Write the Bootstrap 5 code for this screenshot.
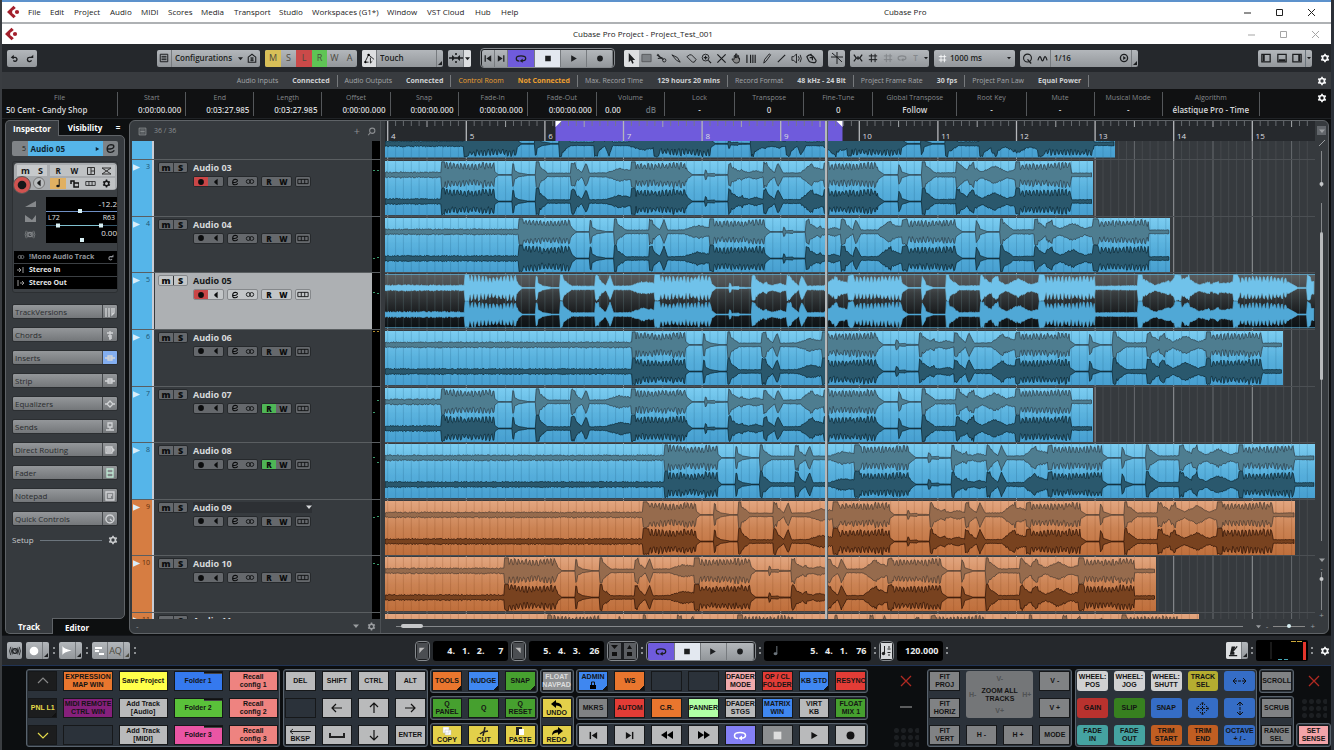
<!DOCTYPE html>
<html lang="en">
<head>
<meta charset="utf-8">
<meta name="viewport" content="width=device-width, initial-scale=1">
<title>Cubase Pro Project - Project_Test_001</title>
<link rel="stylesheet" href="https://cdn.jsdelivr.net/npm/bootstrap@5.3.0/dist/css/bootstrap.min.css">
<script src="https://cdn.jsdelivr.net/npm/bootstrap@5.3.0/dist/js/bootstrap.bundle.min.js"></script>
<style>
:root{--panel:#363a3e;--edge:#5f6367;--bar:#25282c;--blue:#55b5e9;--orange:#d67d42;--violet:#6f5bdc}
body{font:8px/12px "Open Sans","Noto Sans",sans-serif;background:#0d0f10;color:#c9cbcd}
svg{display:block;flex:none}
.shell{min-height:640px;border-left:2px solid #3a3d41;border-right:3px solid #2b3038;overflow:hidden}
.shell .btn{--bs-btn-padding-x:0;--bs-btn-padding-y:0;--bs-btn-border-width:0px;--bs-btn-border-radius:0;font:inherit;color:inherit;display:flex;align-items:center;justify-content:center}
.shell select,.shell input{font:inherit;color:inherit;border:0;background:none;appearance:none;padding:0;min-width:0}
.px7{width:7px}.px13{width:13px}.px14{width:14px}.px15{width:15px}.px16{width:16px}.px17{width:17px}.px18{width:18px}
.px60{width:60px}.px66{width:66px}
.gap3{gap:3px}.gap4{gap:4px}.gap5{gap:5px}.gap8{gap:8px}
.shrinkable{min-width:0;min-height:0}
.zero{font-size:7px}
/* window bars */
.winbar{background:#fff;color:#222;display:flex;align-items:center}
.winbar.first{height:24px;border-top:2px solid #5d92cc;border-bottom:2px solid #aeb1b4;padding:0 4px}
.winbar.second{height:20px;padding-left:2px;font-weight:500}
.before1{flex:363 1 0}.after1{flex:308 1 0}.before2{flex:557 1 0}.after2{flex:524 1 0}
.menus{display:grid;grid-template-columns:22px 24px 36px 31px 27px 33px 33px 45px 33px 75px 40px 48px 26px 24px}
.menus a{color:#222;text-decoration:none;white-space:nowrap}
.winbtns{display:grid;grid-template-columns:repeat(3,32px);justify-items:center}
#wb2{color:#a5a5a5}
/* toolbar */
.toolbar{height:28px;background:var(--bar);padding:0 1px 0 5px}
.tgroup{height:17px;display:flex;background:linear-gradient(#b3b7bb,#93979b);border-radius:2px;color:#1c1e20;overflow:hidden;font-weight:600}
.tgroup .btn,.tgroup select{border-right:1px solid #777b7f;height:17px}
.tgroup.plain .btn{border-right:0}
.tgroup select{padding:0 3px}
.tgroup .noline{border:0}
.tgroup .corner{width:6px;align-items:flex-end;padding-bottom:2px;border:0}
.tgroup .pale{background:#dddfe1}
.tgroup .letters .btn,.letters .btn{font-weight:400;color:#4c4a40;font-size:9px}
.framed{border:1px solid #85898d;border-radius:4px;padding:1px;height:20px;background:#1b1d20}
.statusline{height:17px;background:#383b3f;font-size:7px;color:#a3a6a9}
.statusline b{color:#d0d2d4;margin-left:14px}
.statusline .item{border-right:1px solid #76797c;padding:0 7px;line-height:12px;white-space:nowrap}
.statusline .warn,.statusline .warn b{color:#eea02f}
.infoline{height:30px;background:#101112;border-bottom:1px solid #202326;grid-template-columns:116fr 68fr 68fr 68fr 68fr 68fr 69fr 69fr 68fr 70fr 69fr 69fr 84fr 69fr 68fr 68fr 97fr 71fr}
.cellx{border-right:1px solid #54575a;margin:3px 0;text-align:center;line-height:12px;font-size:7px;color:#85888b;white-space:nowrap}
.cellx b{display:block;font-weight:600;font-size:8px;color:#d5d7d9}
.cellx.timeval b{text-align:right;padding-right:4px}
/* inspector */
.inspector{width:120px;margin:1px 4px 1px 3px;flex:none}
.tabrow{height:16px;display:flex}
.tabrow .btn{color:#fff;font-weight:700}
.tabrow .on{background:var(--panel);border:1px solid var(--edge);position:relative;z-index:1}
.inspector .top .on{border-bottom:0;border-radius:5px 0 0 0;width:54px}
.inspector .bot .btn{padding-top:3px;width:48px}
.inspector .bot .on{border-top:0;border-radius:0 0 0 5px}
.insbody{background:var(--panel);border:1px solid var(--edge);padding:5px 6px;border-radius:0 5px 5px 0;margin:-1px 0}
.namebar{height:15px;background:#7f8387;border-radius:2px;overflow:hidden;color:#1c1e20}
.namebar .num{width:15px;text-align:right;font-size:7px;line-height:15px;padding-right:1px}
.namebar .nm{background:var(--blue);font-weight:700;color:#0f2634;padding:0 3px;width:75px}
.chan{border:1px solid #2c2f32;border-radius:3px;background:#3c4044;padding:1px 1px 3px;margin-top:5px;height:132px}
.chanbtns{background:#a9acaf;border-radius:4px 4px 4px 12px;height:27px;color:#161718;font-weight:700;width:103px;padding:2px 2px 1px 3px}
.msbig{width:30px}.msbig>div:first-child{line-height:11px;font-size:9px;background:#c6c9cb}
.msbig>div:last-child{gap:2px;margin-left:-4px}
.recbig{width:18px;height:18px}.monbig{width:12px;height:12px}
.shell .recbig{background:#d05350;border:1px solid #555}.shell .monbig{background:#b9bcbe;border:1px solid #777;margin-top:1px}
.rwrow{height:11px;margin-bottom:2px;background:#bfc2c4;line-height:11px}.rwrow .btn{width:25%}
.shell .amber{background:#e0b062}
.dispwrap{margin-top:7px;width:103px;color:#85888b}.dispicons{width:32px;height:46px}
.disp{background:#000;color:#e0e2e4;width:71px;height:46px;padding:2px 0}
.disp>div{line-height:10px;text-align:right}.disp .pan{font-size:7px;padding:0 2px}
.routes{margin-top:8px}
.routes>div{background:#000;height:12px;margin-bottom:1px;line-height:12px;font-size:7px;color:#e5e6e7;font-weight:700;padding:0 3px;width:103px;display:flex;gap:4px}
.routes .dim{color:#92959a}
#sections{margin-top:11px}
.section{height:15px;background:linear-gradient(#94979a,#74777a);border-radius:2px;border:1px solid #2b2e31;margin-bottom:8px;color:#2a2c2e;overflow:hidden}
.shell .section .btn{width:100%;height:13px;justify-content:space-between;padding-left:2px}
.section .icn{width:15px;height:13px;border-left:1px solid #45484b;display:flex;align-items:center;justify-content:center}
.section .lit{background:#83aef0}
.setupbtn{gap:6px}
.shell input[type=range]{display:block;width:100%;height:4px}
.shell input[type=range]::-webkit-slider-runnable-track{height:1px;background:var(--tr,#6f8fc4)}
.shell input[type=range]::-webkit-slider-thumb{appearance:none;width:4px;height:4px;background:#d8f0f4;margin-top:-2px}
.shell .dot{--tr:#888}.shell input.dot{width:32px}
.shell .dot::-webkit-slider-thumb{border-radius:2px}
.shell .bare{--tr:transparent}
/* project zone */
.project{background:var(--panel);border:1px solid var(--edge);border-radius:6px;margin:1px 2px 1px 0;padding-left:2px}
.tracks{width:248px;flex:none}
.headrow{height:20px;flex:none;color:#8b8e91;padding:0 4px 0 6px;gap:7px}
.plus{font-size:11px!important}
.footrow{height:14px;flex:none;color:#9a9da0}
.trow{flex:1 1 0;min-height:0;display:flex;overflow:hidden;border-top:1px solid #5a5e61}
.cut-top{flex:0 0 18px!important;border-top:0!important}
.cut-bot{flex:0 0 7px!important}
.strip{width:22px;border-right:2px solid #c9ccd4;margin-right:1px;background:var(--blue);color:#1d5270;font-size:7px;display:flex;justify-content:flex-end;padding-right:2px;line-height:14px;flex:none}
.strip svg{margin:4px auto 0 1px}
.strip.o{background:var(--orange);color:#5d2c0b}
.tbody{flex:1;padding:2px 3px 0;display:flex;gap:5px;color:#d7d9db}
.tbody.sel{background:#adb0b3;color:#16181a}
.bgrp{display:flex;background:#65686c;border:1px solid #26292c;border-radius:2px;height:11px;color:#0b0c0d;overflow:hidden;font:800 8px/9px "Open Sans","Noto Sans",sans-serif}
.sel .bgrp{background:#c3c6c8;border-color:#85888b}
.bgrp .btn{width:14px;height:9px;flex:none}
.bgrp .btn+.btn{width:15px}
.bgrp.ms .btn{width:14px;font-size:9px}
.bgrp.ms .btn+.btn{border-left:1px solid #303336}
.minis{gap:3px;margin-top:3px}
.shell .redon{background:#c94647}.shell .greenon{background:#4fb656}
.tname{font:700 9px/11px "Open Sans","Noto Sans",sans-serif}
.tname.drop{background:#2d3034;width:119px;display:flex;justify-content:space-between;align-items:center}
.meterx{width:8px;background:#000;flex:none}
.divider{width:5px;border-left:1px solid #4c5054;flex:none}
.ruler{background:#26292d;height:20px;flex:none;position:relative}
.ruler .nums{position:absolute;inset:9px 0 0 0;display:flex;color:#dcdee0;font-size:8px;overflow:hidden}
.ruler svg,.lanes{width:100%}
.lane{flex:1 1 0;min-height:0;display:flex;overflow:hidden;border-top:1px solid #4b4f53}
.lane svg{flex:1 1 0;min-height:0;min-width:0}
.playhead{position:absolute;top:0;bottom:0;left:47.3%;width:3px;background:#b4b8ba;border:solid #5b6266;border-width:0 1px 0 0}
.hscroll{padding-left:11px}
.hline{border-top:1px solid #85888b;height:1px}
.hthumb{width:22px;height:4px;margin:-3px 0 0 5px;background:#c6c8ca;border-radius:2px}
.vbar{width:13px;flex:none;align-items:center;color:#9a9da0;padding:5px 0 14px}
.vbar span{line-height:9px}
.shell .vmenu{width:9px;height:9px;background:#62666b}
.v1{flex:31;border-left:1px solid #85888b}.v2{flex:155;width:3px;background:#b9bbbd;border-radius:2px}.v3{flex:170;width:1px;background:#85888b}
/* transport zone */
.transport{height:31px;background:var(--bar);border-top:1px solid #14161a;border-bottom:1px solid #203354;padding:0 1px 0 5px}
.shell .loc{width:11px;height:16px;background:#4b4e52;color:#bbb}
.shell .punch{width:12px;height:16px;background:#5b5e62;color:#111}
.shell .loc.pale{background:#d6d8da;color:#222}
.shell .whitei{color:#fff}
.lcd{background:#000;border-radius:3px;height:20px;color:#e8eaeb;font:700 9px/20px "Open Sans","Noto Sans",sans-serif;display:flex;justify-content:flex-end;gap:7px;padding:0 4px;width:75px}
.lcd.wide{width:107px}.lcd.tempo{width:46px}
.lcd .last{min-width:12px;text-align:right}
.dots{width:1px;height:7px;border-left:2px dotted #8b8e91}
/* controller deck */
.deck{background:#0c0e10;padding:3px 0 3px 24px;color:#141414;font:700 7px/8px "Liberation Sans",Arial,sans-serif}
.grp{display:flex;flex-direction:column;gap:3px;min-width:0}
.boxk{background:#2b323a;border:1px solid #59636d;border-radius:3px;padding:1px;display:grid;gap:7px 6px;grid-auto-rows:20px}
.boxk .btn{min-width:0;border:1px solid #16181a;white-space:nowrap;position:relative;flex-direction:column;text-align:center;overflow:visible}
.boxk .rnd{border-radius:3px;border:0}
.zoomall{grid-column:span 2;grid-row:span 2}
.zgrid{grid-template-columns:12px 1fr 12px;align-items:center;width:66px;gap:4px 0;color:#505254}
.zgrid b{color:#141414}
.fold::before{content:"";position:absolute;right:0;top:0;width:18px;height:2px;background:#111;border-bottom:1px solid #444}
.cnr::after{content:"";position:absolute;right:0;bottom:0;width:4px;height:4px;background:linear-gradient(135deg,transparent 50%,#111 50%)}
.perf{width:26px;height:20px;background:radial-gradient(circle,#1c1f22 2px,transparent 3px) 0 0/7px 7px}
.tall{height:24px}
.sidekeys{padding:6px 0 0}
</style>
</head>
<body>
<svg width="0" height="0" class="position-absolute" aria-hidden="true"><defs>
<symbol id="logo" viewBox="0 0 14 14"><path d="M1 7 7.500.8 9.800 3 8 4.600Q6 5.600 6 7q0 1.600 2 2.600l1.800 1.600-2.300 2z" fill="#a3202c"/><circle cx="11" cy="7" r="2.100" fill="#a3202c"/></symbol>
<symbol id="gear" viewBox="0 0 12 12"><circle cx="6" cy="6" r="3" fill="none" stroke="currentColor" stroke-width="2"/><path d="M6 .8v2M6 9.200v2M1.500 3.400l1.700 1M8.800 7.600l1.700 1M1.500 8.600l1.700-1M8.800 4.400l1.700-1" stroke="currentColor" stroke-width="2"/></symbol>
<symbol id="undo" viewBox="0 0 12 12"><path d="M3 4.500h4a2.600 2.600 0 1 1-2.500 4" fill="none" stroke="currentColor" stroke-width="1.800"/><path d="M1 4.600 5 1v6z" fill="currentColor"/></symbol>
<symbol id="redo" viewBox="0 0 12 12"><path d="M9 4.500H6a2.800 2.800 0 1 0 2.600 3.800" fill="none" stroke="currentColor" stroke-width="1.800"/><path d="M11 5.400V1L6.600 5.400z" fill="currentColor"/></symbol>
<symbol id="listi" viewBox="0 0 12 12"><path d="M1.500 1.500h9v9h-9zM3 4h6M3 6h6M3 8h6" fill="none" stroke="currentColor" stroke-width="1.200"/></symbol>
<symbol id="home" viewBox="0 0 12 12"><path d="M1.500 5 6 1.500 10.500 5v6h-9zM4 6h4M4 8.500h4M6 5v5" fill="none" stroke="currentColor" stroke-width="1.300"/></symbol>
<symbol id="down" viewBox="0 0 6 6"><path d="M0 1.500h6L3 5z" fill="currentColor"/></symbol>
<symbol id="cor" viewBox="0 0 6 6"><path d="M6 0v6H0z" fill="currentColor"/></symbol>
<symbol id="touch" viewBox="0 0 12 12"><path d="M1 10 5 2l6 5M1 10h4M7 5v6l2-2" fill="none" stroke="currentColor"/><circle cx="5" cy="2" r="1.300"/><circle cx="1.500" cy="10" r="1.200"/></symbol>
<symbol id="scr" viewBox="0 0 14 12"><path d="M0 6h5M14 6H9M7 1v2M7 5v2M7 9v2" stroke="currentColor" stroke-width="1.600"/><path d="m3 3 3.500 3L3 9zm8 0L7.500 6 11 9z" fill="currentColor"/></symbol>
<symbol id="prev" viewBox="0 0 10 10"><path d="M1.500 1v8" stroke="currentColor" stroke-width="1.600"/><path d="M9 1v8L3 5z" fill="currentColor"/></symbol>
<symbol id="next" viewBox="0 0 10 10"><path d="M8.500 1v8" stroke="currentColor" stroke-width="1.600"/><path d="M1 1v8l6-4z" fill="currentColor"/></symbol>
<symbol id="loop" viewBox="0 0 14 10"><path d="M5 8C2 8 1.500 6.500 1.500 5S3 2 7 2s5.500 1.500 5.500 3S11 7.600 8 7.800" fill="none" stroke="currentColor" stroke-width="1.500"/><path d="M9 5v5L5.500 7.800z" fill="currentColor"/></symbol>
<symbol id="stop" viewBox="0 0 10 10"><path d="M1.500 1.500h7v7h-7z" fill="currentColor"/></symbol>
<symbol id="play" viewBox="0 0 10 10"><path d="M1.500 1v8l7-4z" fill="currentColor"/></symbol>
<symbol id="rec" viewBox="0 0 10 10"><circle cx="5" cy="5" r="3.600" fill="currentColor"/></symbol>
<symbol id="arrow" viewBox="0 0 12 12"><path d="M3 0v10l2.300-2 1.500 3.600 1.600-.7L7 7.500h3z" fill="currentColor"/></symbol>
<symbol id="rsel" viewBox="0 0 12 12"><path d="M1 1.500h10v8H1z" fill="#7d8185" stroke="#55585b"/></symbol>
<symbol id="cutt" viewBox="0 0 12 12"><path d="m1 2 7 5M2 6l5-1" stroke="currentColor" stroke-width="1.300"/><circle cx="9" cy="8" r="1.800" fill="none" stroke="currentColor"/><path d="M4 4 2 1" stroke="currentColor"/></symbol>
<symbol id="glue" viewBox="0 0 12 12"><path d="m1 2 6 3 3 5-4-2z" fill="none" stroke="currentColor"/></symbol>
<symbol id="erase" viewBox="0 0 12 12"><path d="m1 4 3-2h2l5 5-2 3H7z" fill="none" stroke="currentColor"/></symbol>
<symbol id="zoomi" viewBox="0 0 12 12"><circle cx="5" cy="5" r="3.700" fill="none" stroke="currentColor"/><path d="M3 5h4M5 3v4M8 8l3 3" stroke="currentColor" stroke-width="1.300"/></symbol>
<symbol id="xx" viewBox="0 0 12 12"><path d="m1.500 1.500 9 9M10.500 1.500l-9 9" stroke="currentColor" stroke-width="1.300"/></symbol>
<symbol id="hand" viewBox="0 0 12 12"><path d="M3.500 7V3l1-.5.500 3V1h1.300v4.500l1-3 1 .4V6l1-.5V8q0 3-3 3T3 9.500L1 6.500h1z" fill="#888" stroke="currentColor"/></symbol>
<symbol id="warp" viewBox="0 0 12 12"><path d="M1 2v9M5 2v9M7.500 2v9M10 2v9" stroke="currentColor" stroke-width="1.300"/></symbol>
<symbol id="pen" viewBox="0 0 12 12"><path d="m3 11 1-4 5-6 1.500 1-5 7z" fill="none" stroke="currentColor"/></symbol>
<symbol id="lin" viewBox="0 0 12 12"><path d="m2 10 8-8" stroke="currentColor" stroke-width="1.200"/></symbol>
<symbol id="spk" viewBox="0 0 12 12"><path d="M1 4h2l3-3v10L3 8H1zM8 3.500q2 2.500 0 5M10 2q2.500 4 0 8" fill="none" stroke="currentColor"/></symbol>
<symbol id="pal" viewBox="0 0 12 12"><path d="M1 4q3-4 7 0l3 4q0 3-3 2.500t-4-1T1 4zM4 5h3v3M5 1l2 3" fill="none" stroke="currentColor" stroke-width="1.300"/></symbol>
<symbol id="xf" viewBox="0 0 12 12"><path d="M6 0v12M0 5h12M1 1q5 4 10 9" fill="none" stroke="currentColor"/></symbol>
<symbol id="snp" viewBox="0 0 12 12"><path d="m1 2 3 4-3 4M11 2 8 6l3 4M4 6h4M6 4v4" fill="none" stroke="currentColor" stroke-width="1.500"/></symbol>
<symbol id="hash" viewBox="0 0 12 12"><path d="M4 1v10M8.500 1v10M1 3.500h10M1 8h10" stroke="currentColor" stroke-width="1.200"/></symbol>
<symbol id="qq" viewBox="0 0 12 12"><circle cx="6" cy="5.500" r="4.300" fill="none" stroke="currentColor" stroke-width="1.200"/><path d="m6 7 4 4.500" stroke="currentColor" stroke-width="1.400"/></symbol>
<symbol id="qplay" viewBox="0 0 12 12"><circle cx="6" cy="6" r="4.300" fill="none" stroke="currentColor" stroke-width="1.600"/><path d="M5 3.500v5L8.500 6z" fill="currentColor"/></symbol>
<symbol id="wavy" viewBox="0 0 12 12"><path d="M1 8q2-7 3.500-2t3 0 3.500 2" fill="none" stroke="currentColor" stroke-width="1.300"/></symbol>
<symbol id="lz" viewBox="0 0 12 12"><path d="M1 1.500h10v9H1z" fill="none" stroke="currentColor" stroke-width="1.500"/><path d="M2 2h2.500v8H2z" fill="currentColor"/></symbol>
<symbol id="bz" viewBox="0 0 12 12"><path d="M1 1.500h10v9H1z" fill="none" stroke="currentColor" stroke-width="1.500"/><path d="M2 7.500h8V10H2z" fill="currentColor"/></symbol>
<symbol id="rz" viewBox="0 0 12 12"><path d="M1 1.500h10v9H1z" fill="none" stroke="currentColor" stroke-width="1.500"/><path d="M7.500 2H10v8H7.500z" fill="currentColor"/></symbol>
<symbol id="mag" viewBox="0 0 12 12"><circle cx="7" cy="5" r="3.500" fill="none" stroke="currentColor" stroke-width="1.400"/><path d="M4.500 7.500 1.500 11" stroke="currentColor" stroke-width="1.400"/></symbol>
<symbol id="mon" viewBox="0 0 10 10"><path d="M7 1v8L3 6V4z" fill="currentColor"/></symbol>
<symbol id="ee" viewBox="0 0 10 10"><path d="M2 5.500Q8 5.500 8 3.300 8 1.500 5.500 1.500 2 1.800 2 5.500q0 3 3 3 2 0 3.500-1.800" fill="none" stroke="currentColor" stroke-width="1.300"/></symbol>
<symbol id="oo" viewBox="0 0 12 8"><circle cx="4" cy="4" r="2.400" fill="none" stroke="currentColor"/><circle cx="8" cy="4" r="2.400" fill="none" stroke="currentColor"/></symbol>
<symbol id="fr" viewBox="0 0 14 8"><path d="M1 1.500h12v5H1zM5 1.500v5M9 1.500v5" fill="none" stroke="currentColor"/></symbol>
<symbol id="wedge" viewBox="0 0 10 8"><path d="M0 0v8l9-4z" fill="#d9eefa"/></symbol>
<symbol id="cyc" viewBox="0 0 12 12"><path d="M1 1v10q1-3 10-5Q2 4 1 1z" fill="#fff"/></symbol>
<symbol id="flagr" viewBox="0 0 12 12"><path d="M2 2h8v8L6.500 6z" fill="currentColor"/></symbol>
<symbol id="flagl" viewBox="0 0 12 12"><path d="M10 2H2v8l3.500-4z" fill="currentColor"/></symbol>
<symbol id="metro" viewBox="0 0 12 12"><path d="M4 1h4L7 4l-2 3h2v3H2z" fill="currentColor"/><path d="m5 7 5-6M1 11h9" stroke="currentColor" stroke-width="1.400"/></symbol>
<symbol id="note" viewBox="0 0 8 12"><path d="M5 0h1.200v9H5z" fill="currentColor"/><ellipse cx="4" cy="9.300" rx="2.300" ry="1.700" fill="currentColor"/></symbol>
<symbol id="ping" viewBox="0 0 14 12"><path d="M4 2Q1 6 4 10M10 2q3 4 0 8M2 1q-3 5 0 10M12 1q3 5 0 10" fill="none" stroke="currentColor"/><circle cx="7" cy="6" r="2.800" fill="none" stroke="currentColor" stroke-width="1.600"/><path d="M7 4v2h2" fill="none" stroke="currentColor"/></symbol>
</defs></svg>

<div class="shell vh-100 d-flex flex-column">
  <header>
    <div class="winbar first">
      <svg width="14" height="14" class="me-2"><use href="#logo"/></svg>
      <nav class="menus" id="menus" aria-label="Main menu"></nav>
      <span class="before1"></span><span>Cubase Pro</span><span class="after1"></span>
      <div class="winbtns" id="wb1"></div>
    </div>
    <div class="winbar second">
      <svg width="14" height="14"><use href="#logo"/></svg>
      <span class="before2"></span><span>Cubase Pro Project - Project_Test_001</span><span class="after2"></span>
      <div class="winbtns" id="wb2"></div>
    </div>
  </header>

  <div class="toolbar d-flex align-items-center justify-content-between">
    <div class="tgroup plain"><button class="btn px15" aria-label="Undo"><svg width="9" height="9"><use href="#undo"/></svg></button><button class="btn px15" aria-label="Redo"><svg width="9" height="9"><use href="#redo"/></svg></button></div>
    <div class="d-flex align-items-center gap5">
      <div class="tgroup"><button class="btn px15" aria-label="Setup"><svg width="10" height="10"><use href="#listi"/></svg></button>
        <label class="d-flex align-items-center"><select aria-label="Configurations" class="noline px66"><option>Configurations</option></select><svg width="5" height="5"><use href="#down"/></svg></label>
        <button class="btn noline px17" aria-label="Home"><svg width="10" height="10"><use href="#home"/></svg></button></div>
      <div class="tgroup plain letters" id="mslr"></div>
      <div class="tgroup"><button class="btn px15 pale" aria-label="Automation"><svg width="11" height="11"><use href="#touch"/></svg></button><select aria-label="Automation mode" class="px60"><option>Touch</option></select><button class="btn corner" aria-label="More"><svg width="4" height="4"><use href="#cor"/></svg></button></div>
      <div class="tgroup me-1"><button class="btn px16" aria-label="Auto-scroll"><svg width="14" height="12"><use href="#scr"/></svg></button><button class="btn noline px7 pale" aria-label="Scroll options"><svg width="5" height="5"><use href="#down"/></svg></button></div>
      <div class="framed d-flex me-1"><div class="tgroup" data-transport="13 13 27 26 26 26"></div></div>
      <div class="tgroup plain pe-1" id="tools"></div>
      <div class="tgroup"><button class="btn noline px17" aria-label="Crossfade"><svg width="12" height="12"><use href="#xf"/></svg></button></div>
      <div class="tgroup plain"><button class="btn px15" aria-label="Snap zero"><svg width="10" height="10"><use href="#snp"/></svg></button><button class="btn px16" aria-label="Snap"><svg width="10" height="10"><use href="#hash"/></svg></button><button class="btn px14 opacity-25" aria-label="Snap type"><svg width="10" height="10"><use href="#hash"/></svg></button><button class="btn px14 opacity-25" aria-label="Cycle grid"><svg width="10" height="8"><use href="#loop"/></svg></button><button class="btn px13 opacity-25">T</button><button class="btn px7" aria-label="Snap menu"><svg width="4" height="4"><use href="#down"/></svg></button></div>
      <label class="tgroup align-items-center ps-1"><svg width="9" height="9" class="text-light"><use href="#hash"/></svg><select aria-label="Grid" class="noline px60"><option>1000 ms</option></select><svg width="4" height="4" class="me-1"><use href="#down"/></svg></label>
      <div class="tgroup"><button class="btn noline px15" aria-label="Quantize"><svg width="11" height="11"><use href="#qq"/></svg></button><button class="btn px16" aria-label="Iterative"><svg width="11" height="11"><use href="#wavy"/></svg></button><select aria-label="Quantize preset" class="noline px66"><option>1/16</option></select><button class="btn px15" aria-label="Quantize panel"><svg width="10" height="10"><use href="#qplay"/></svg></button><button class="btn corner" aria-label="More quantize"><svg width="4" height="4"><use href="#cor"/></svg></button></div>
    </div>
    <div class="d-flex align-items-center gap-1"><div class="tgroup plain"><button class="btn px16" aria-label="Left zone"><svg width="10" height="10"><use href="#lz"/></svg></button><button class="btn px15" aria-label="Lower zone"><svg width="10" height="10"><use href="#bz"/></svg></button><button class="btn px16" aria-label="Right zone"><svg width="10" height="10"><use href="#rz"/></svg></button><button class="btn px7 border-start border-secondary" aria-label="Layout"><svg width="4" height="4"><use href="#down"/></svg></button></div>
    <button class="btn ms-1 text-light" aria-label="Toolbar setup"><svg width="10" height="10"><use href="#gear"/></svg></button></div>
  </div>

  <div class="statusline d-flex align-items-center">
    <div class="flex-fill"></div>
    <div class="d-flex" id="status"></div>
    <div class="flex-fill d-flex justify-content-end"><button class="btn text-light me-1" aria-label="Status setup"><svg width="10" height="10"><use href="#gear"/></svg></button></div>
  </div>
  <div class="infoline d-grid" id="info"></div>

  <main class="d-flex flex-grow-1 shrinkable">
    <aside class="inspector d-flex flex-column">
      <div class="tabrow top"><button class="btn on">Inspector</button><button class="btn flex-fill">Visibility</button><button class="btn px14" aria-label="Tabs">=</button></div>
      <div class="insbody flex-grow-1">
        <div class="namebar d-flex justify-content-between"><span class="num">5</span><span class="nm d-flex justify-content-between align-items-center">Audio 05<svg width="5" height="6"><use href="#play"/></svg></span><button class="btn px15" aria-label="Edit channel"><svg width="11" height="11"><use href="#ee"/></svg></button></div>
        <div class="chan">
          <div class="chanbtns d-flex gap3">
            <div class="msbig"><div class="d-flex justify-content-around"><button class="btn">m</button><button class="btn">S</button></div>
              <div class="d-flex align-items-start"><button class="btn rounded-circle recbig" aria-label="Record enable"><svg width="12" height="12"><use href="#rec"/></svg></button><button class="btn rounded-circle monbig" aria-label="Monitor"><svg width="8" height="8"><use href="#mon"/></svg></button></div></div>
            <div class="flex-fill" id="chanR"></div>
          </div>
          <div class="dispwrap d-flex justify-content-between">
            <div class="dispicons d-flex flex-column align-items-center justify-content-around"><svg width="11" height="6"><path d="M0 6 11 0v6z" fill="currentColor"/></svg><svg width="11" height="7"><path d="M0 0v7h11V0L7 5z" fill="currentColor"/></svg><svg width="14" height="9"><use href="#ping"/></svg></div>
            <div class="disp"><div>-12.2</div><input type="range" value="48" aria-label="Volume"><div class="pan d-flex justify-content-between"><span>L72</span><span>R63</span></div><svg width="71" height="5"><path d="M0 2.500h71" stroke="#35566a"/><path d="M12 2.500h43" stroke="#7fc0d0"/><path d="M10 .5h4v4h-4zM53 .5h4v4h-4z" fill="#d8f0f4"/></svg><div>0.00</div><input type="range" value="50" class="bare" aria-label="Delay"></div>
          </div>
          <div class="routes"><div class="dim align-items-center"><svg width="8" height="8"><use href="#oo"/></svg><span class="flex-fill">!Mono Audio Track</span><svg width="7" height="7"><use href="#redo"/></svg></div><div class="align-items-center"><svg width="8" height="8"><path d="M0 4h4M2 2l2 2-2 2M6 1v6" stroke="#999" fill="none"/></svg>Stereo In</div><div class="align-items-center"><svg width="8" height="8"><path d="M1 1v6M3 4h4M5 2l2 2-2 2" stroke="#999" fill="none"/></svg>Stereo Out</div></div>
        </div>
        <div id="sections"></div>
        <button class="btn w-100 setupbtn"><span>Setup</span><span class="flex-fill border-top border-secondary"></span><svg width="10" height="10"><use href="#gear"/></svg></button>
      </div>
      <div class="tabrow bot"><button class="btn on">Track</button><button class="btn">Editor</button></div>
    </aside>

    <section class="project d-flex flex-grow-1 shrinkable">
      <div class="tracks d-flex flex-column">
        <div class="headrow d-flex align-items-center"><svg width="9" height="9"><use href="#listi"/></svg><span class="flex-fill zero">36 / 36</span><button class="btn plus">+</button><button class="btn" aria-label="Find track"><svg width="9" height="9"><use href="#mag"/></svg></button></div>
        <div class="d-flex flex-column flex-grow-1 shrinkable" id="tracklist"></div>
        <div class="footrow d-flex align-items-center justify-content-end gap8 px-1"><span class="flex-fill">-</span><svg width="6" height="6"><use href="#down"/></svg><svg width="9" height="9"><use href="#gear"/></svg></div>
      </div>
      <div class="divider"></div>
      <div class="d-flex flex-column flex-grow-1 shrinkable">
        <div class="position-relative d-flex flex-column flex-grow-1 shrinkable">
          <div class="ruler"><svg id="rulersvg" height="20" viewBox="0 0 930 20" preserveAspectRatio="none"></svg><div class="nums" id="nums"></div></div>
          <div class="lanes d-flex flex-column flex-grow-1 shrinkable" id="lanes"></div>
          <div class="playhead"></div>
        </div>
        <div class="footrow hscroll d-flex align-items-center gap5"><div class="flex-fill hline"><div class="hthumb"></div></div><svg width="5" height="5" class="ms-2"><use href="#down"/></svg><span>-</span><input class="dot" type="range" value="50" aria-label="Horizontal zoom"><span>+</span></div>
      </div>
      <div class="vbar d-flex flex-column">
        <button class="btn vmenu" aria-label="Ruler menu"><svg width="6" height="6"><use href="#down"/></svg></button>
        <svg width="8" height="8" class="mt-1"><path d="m1 7 6-6" stroke="currentColor"/></svg>
        <svg width="5" height="36" class="mt-1 mb-3"><path d="M2.500 0v36" stroke="#85888b"/><circle cx="2.500" cy="33" r="2" fill="#c6c8ca"/></svg>
        <div class="v1"></div><div class="v2"></div><div class="v3"></div>
        <svg width="6" height="6" class="mt-3"><use href="#down"/></svg><span>-</span>
        <svg width="5" height="38"><path d="M2.500 0v38" stroke="#85888b"/><circle cx="2.500" cy="7" r="2" fill="#c6c8ca"/></svg><span>+</span>
      </div>
    </section>
  </main>

  <div class="transport d-flex align-items-center justify-content-between">
    <div class="d-flex align-items-center gap4">
      <div class="tgroup"><button class="btn noline px15" aria-label="Constrain delay"><svg width="12" height="10"><use href="#ping"/></svg></button></div>
      <div class="tgroup"><button class="btn px17 whitei" aria-label="Record mode"><svg width="12" height="12"><use href="#rec"/></svg></button><button class="btn corner" aria-label="Record menu"><svg width="4" height="4"><use href="#cor"/></svg></button></div><span class="dots"></span>
      <div class="tgroup"><button class="btn px17" aria-label="Cycle mode"><svg width="12" height="11"><use href="#cyc"/></svg></button><button class="btn corner" aria-label="Cycle menu"><svg width="4" height="4"><use href="#cor"/></svg></button></div><span class="dots"></span>
      <div class="tgroup letters"><button class="btn px16" aria-label="MIDI record"><svg width="11" height="10"><path d="M1 1h7v2H1zM1 4h4v2H1zM5 7h5v2H5z" fill="#fff"/></svg></button><button class="btn px16">AQ</button><button class="btn corner" aria-label="AQ menu"><svg width="4" height="4"><use href="#cor"/></svg></button></div><span class="dots"></span>
    </div>
    <div class="d-flex align-items-center gap3">
      <div class="framed"><button class="btn loc" aria-label="Left locator"><svg width="8" height="9"><use href="#flagl"/></svg></button></div>
      <div class="lcd"><span>4.</span><span>1.</span><span>2.</span><span class="last">7</span></div>
      <div class="framed"><button class="btn loc" aria-label="Right locator"><svg width="8" height="9"><use href="#flagr"/></svg></button></div>
      <div class="lcd"><span>5.</span><span>4.</span><span>3.</span><span class="last">26</span></div>
      <div class="framed d-flex gap3"><button class="btn punch" aria-label="Punch in"><svg width="7" height="11"><path d="M0 0h7L3.500 4zM1 7h5v4H1z" fill="currentColor"/></svg></button><button class="btn punch" aria-label="Punch out"><svg width="7" height="11"><path d="M3.500 0 6 4H1zM1 7h5v4H1z" fill="currentColor"/></svg></button></div>
      <span class="dots"></span>
      <div class="framed d-flex"><div class="tgroup" data-transport="0 0 27 26 26 27"></div></div>
      <span class="dots"></span>
      <div class="lcd wide align-items-center"><svg width="7" height="10" class="me-auto ms-1 text-secondary"><use href="#note"/></svg><span>5.</span><span>4.</span><span>1.</span><span class="last">76</span></div>
      <span class="dots"></span>
      <div class="framed"><button class="btn loc pale" aria-label="Tempo track"><svg width="11" height="11"><path d="M3.500 1v7M8 1v2M8 9v2M6.500 4h3M6.500 7.500h3" stroke="currentColor" fill="none"/><circle cx="2.500" cy="8.500" r="1.700" fill="currentColor"/></svg></button></div>
      <div class="lcd tempo">120.000</div>
      <span class="dots"></span>
    </div>
    <div class="d-flex align-items-center gap3">
      <div class="tgroup"><button class="btn px16 pale" aria-label="Metronome"><svg width="11" height="12"><use href="#metro"/></svg></button><button class="btn corner" aria-label="Metronome menu"><svg width="4" height="4"><use href="#cor"/></svg></button></div><span class="dots"></span>
      <svg width="52" height="21"><rect width="52" height="21" rx="2"/><path d="M15 2v17" stroke="#333"/><path d="M35 1.500h5M41 1.500h5" stroke="#c9a73a"/><path d="M22 19.500h4M28 19.500h4" stroke="#46a8b6"/><path d="M48.500 2v18" stroke="#e4352b" stroke-width="3"/></svg><span class="dots"></span>
      <button class="btn text-light ms-1" aria-label="Transport setup"><svg width="10" height="10"><use href="#gear"/></svg></button>
    </div>
  </div>

  <footer class="deck d-flex" id="deck"></footer>
</div>

<script>
const $=id=>document.getElementById(id);
const ic=(n,w,h=w)=>`<svg width="${w}" height="${h}"><use href="#${n}"/></svg>`;

$('menus').innerHTML='File,Edit,Project,Audio,MIDI,Scores,Media,Transport,Studio,Workspaces (G1*),Window,VST Cloud,Hub,Help'.split(',').map(t=>`<a href="#">${t}</a>`).join('');
for(const id of ['wb1','wb2'])$(id).innerHTML=[['Minimize','M1 5h7'],['Maximize','M1.500 1.500h6v6h-6z'],['Close','m1 1 7 7M8 1 1 8']].map(([l,d])=>`<button class="btn" aria-label="${l}"><svg width="9" height="9"><path d="${d}" fill="none" stroke="currentColor"/></svg></button>`).join('');
$('mslr').innerHTML=[['M','#d8bf58'],['S',''],['L','#cb4a49'],['R','#5fc455'],['W',''],['A','']].map(([t,c])=>`<button class="btn px${t=='M'||t=='L'?16:15}"${c&&` style="background:${c}"`}>${t}</button>`).join('');
document.querySelectorAll('[data-transport]').forEach(el=>{
  const w=el.dataset.transport.split(' ');
  el.innerHTML=['prev','next','loop','stop','play','rec'].map((n,i)=>+w[i]?`<button class="btn" aria-label="${n}" style="width:${w[i]}px;${n=='loop'?'background:var(--violet)':n=='stop'?'background:#e3e8f0':''}">${ic(n,n=='loop'?12:8,9)}</button>`:'').join('');
});
$('tools').innerHTML='arrow,rsel,cutt,glue,erase,zoomi,xx,hand,warp,pen,lin,spk,pal'.split(',').map((n,i)=>`<button class="btn px15 ${i?'':'pale'}" aria-label="${n}">${ic(n,11)}</button>`).join('');
$('status').innerHTML=[['Audio Inputs','Connected'],['Audio Outputs','Connected'],['Control Room','Not Connected',1],['Max. Record Time','129 hours 20 mins'],['Record Format','48 kHz - 24 Bit'],['Project Frame Rate','30 fps'],['Project Pan Law','Equal Power']].map(([a,b,w])=>`<div class="item ${w?'warn':''}">${a}<b>${b}</b></div>`).join('');
$('info').innerHTML=[['File','50 Cent - Candy Shop'],['Start','0:00:00.000'],['End','0:03:27.985'],['Length','0:03:27.985'],['Offset','0:00:00.000'],['Snap','0:00:00.000'],['Fade-In','0:00:00.000'],['Fade-Out','0:00:00.000'],['Volume','0.00'],['Lock','-'],['Transpose','0'],['Fine-Tune','0'],['Global Transpose','Follow'],['Root Key','-'],['Mute','-'],['Musical Mode','-'],['Algorithm','élastique Pro - Time']].map(([a,b],i)=>`<div class="cellx ${i>0&&i<8?'timeval':''}">${a}<b ${i?'':'class="text-start ps-1"'}>${a=='Volume'?'<span class="d-flex justify-content-between px-2"><span>0.00</span><span class="text-secondary">dB</span></span>':b}</b></div>`).join('')+`<div class="d-flex justify-content-end align-items-start pe-1 pt-1"><button class="btn text-light" aria-label="Info setup">${ic('gear',10)}</button></div>`;

$('chanR').innerHTML=[['R','W',`<svg width="8" height="8"><path d="M.5.5h7v7h-7zM4 0v8M4 4h4" fill="none" stroke="#333"/></svg>`,`<svg width="9" height="8"><path d="m0 1 9 6H0l9-6z" fill="none" stroke="#333"/></svg>`],[ic('note',6,9),`<svg width="9" height="8"><path d="M4 3h5v4H4zM1 4V1h3v2" stroke="#111" fill="none" stroke-width="1.500"/></svg>`,ic('fr',11,7),ic('gear',9)]].map((r,j)=>`<div class="rwrow d-flex">${r.map((t,i)=>`<button class="btn ${j&&!i?'amber':''}">${t}</button>`).join('')}</div>`).join('');

const secIcons={TrackVersions:'M1 1v9M4 1v9M7 1v7l2-2V1',Chords:'M5 1v9M2 3h6M3 6h4M4 8h3',Inserts:'M0 5h10M3 3h4v4H3z',Strip:'M0 5h10M3 3h4v4H3z',Equalizers:'M0 5h2l3-3 3 3-3 3-3-3M8 5h2',Sends:'M3 1h4v4H3zM1 8h8M5 5v3','Direct Routing':'M1 2h6v6H1zM2 4h4M2 6h4M7 3l2 2-2 2',Fader:'M2 1h6v8H2zM2 5h6',Notepad:'M1 1h8v8H1zM3 4h4M3 6h3','Quick Controls':'M5 1a4 4 0 1 1-.1 0M5 5l2 2'};
$('sections').innerHTML=Object.entries(secIcons).map(([n,d])=>`<div class="section"><button class="btn"><span>${n}</span><span class="icn ${n=='Inserts'?'lit':''}"><svg width="10" height="10"><path d="${d}" fill="none" stroke="${n=='Fader'?'#bfe8d4':'#d2d4d6'}" stroke-width="1.300"/></svg></span></button></div>`).join('');

/* tracks: start is where the first loud section falls on the 930-unit timeline, end is the clip's right edge */
const tracks=[
 {n:2,start:79,end:730,cut:'top'},{n:3,start:56,end:708,rec:1,m:[4,10,10]},{n:4,start:134,end:785,m:[4,41,40]},
 {n:5,start:80,end:930,rec:1,sel:1,m:[4,19,20]},{n:6,start:247,end:898,m:[4,1,1,'#b08a2a']},{n:7,start:56,end:708,read:1,m:[4,25,13]},
 {n:8,start:279.500,end:930,read:1,m:[4,14,19]},{n:9,start:258,end:910,drop:1,o:1,m:[4,17,16]},{n:10,start:119.500,end:771,o:1,m:[4,7,8]},
 {n:11,start:162.500,end:814,o:1,cut:'bot'}];
$('tracklist').innerHTML=tracks.map(t=>`<div class="trow ${t.cut?'cut-'+t.cut:''}"><div class="strip ${t.o?'o':''}">${t.cut=='top'?'':ic('wedge',8,7)+t.n}</div>
<div class="tbody ${t.sel?'sel':''}">${t.cut=='top'?'':`<div class="bgrp ms"><button class="btn">m</button><button class="btn">S</button></div>
<div><div class="tname ${t.drop?'drop':''}">Audio ${String(t.n).padStart(2,'0')}${t.drop?ic('down',6):''}</div>
<div class="d-flex minis"><div class="bgrp"><button class="btn ${t.rec?'redon':''}" aria-label="Record">${ic('rec',8)}</button><button class="btn" aria-label="Monitor">${ic('mon',8)}</button></div>
<div class="bgrp"><button class="btn" aria-label="Edit">${ic('ee',8)}</button><button class="btn" aria-label="Lanes">${ic('oo',10,7)}</button></div>
<div class="bgrp"><button class="btn ${t.read?'greenon':''}">R</button><button class="btn">W</button></div>
<div class="bgrp"><button class="btn" aria-label="Freeze">${ic('fr',12,7)}</button></div></div></div>`}</div>
<div class="meterx">${t.m?`<svg width="8" height="54"><path d="M1 ${t.m[1]}.5h2M5 ${t.m[2]}.5h2" stroke="${t.m[3]||'#3b9a6c'}"/></svg>`:''}</div></div>`).join('');

/* ruler */
const BAR=78.600,X0=2.700;
let ticks='',mids='',majors='';
for(let i=0;X0+i*BAR/10<928;i++){const x=(X0+i*BAR/10).toFixed(1);
  if(i%10==0)majors+=`M${x} 0V20`;else if(i%5==0)mids+=`M${x} 0V6`;else ticks+=`M${x} 0V5`;}
$('rulersvg').innerHTML=`<path d="M170.500 0h287v20h-287z" fill="#6f5bdc"/><path d="${ticks}" stroke="#777b80" opacity=".8"/><path d="${mids}" stroke="#a5a8ac"/><path d="${majors}" stroke="#b5b7ba" stroke-width="1.300"/><path d="M170.500 0h6l-6 6zM457.500 0h-6l6 6z" fill="#fff"/>`;
$('nums').innerHTML='<span style="flex:0 0 .65%"></span>'+[4,5,6,7,8,9,10,11,12,13,14,15].map(n=>`<span style="flex:0 0 ${(BAR/9.300).toFixed(3)}%">${n}</span>`).join('');

/* amplitude envelope of the song, [from, to, level at from, level at to, texture] */
const env=[[0,4,1,1,'f'],[4,22,1,.92,'L'],[22,40,.85,.9,'L'],[40,53,1,.95,'L'],[53,57,.3,.04,''],[57,71,.03,.03,''],[71,73,.9,.8,''],[73,77,.35,.2,''],[77,86,.16,.05,''],[86,95,.03,.03,''],[95,98,1,1,''],[98,106,.7,.2,'n'],[106,130,.15,.14,'n'],[130,134,1,.95,'n'],[134,141,.65,.15,'n'],[141,145,.2,.9,''],[145,148,.95,.25,''],[148,166,.14,.17,'n'],[166,178,.2,.5,'n'],[178,190,.5,.35,'n'],[190,195,1,1,'f'],[195,230,.88,.92,'L'],[230,246,1,.95,'L'],[246,251,.35,.04,''],[251,264,.03,.03,''],[264,266,.4,.3,''],[266,274,.08,.12,''],[274,287,.05,.03,''],[287,290,1,.95,'n'],[290,298,.7,.3,'n'],[298,302,.3,.48,'n'],[302,308,.3,.2,'n'],[308,315,.2,.35,'n'],[315,322,.35,.18,'n'],[322,326,1,.95,'n'],[326,334,.7,.15,'n'],[334,337,.3,.95,''],[337,342,.9,.15,''],[342,360,.15,.17,'n'],[360,372,.25,.95,'n'],[372,383,.65,.4,'n'],[383,388,.9,1,'f'],[388,425,.85,.92,'L'],[425,437,1,.95,'L'],[437,443,.35,.04,''],[443,457,.03,.03,''],[457,460,.9,.5,''],[460,468,.25,.04,''],[468,481,.03,.03,''],[481,484,1,1,''],[484,494,.75,.18,'n'],[494,515,.16,.18,'n'],[515,519,1,1,'n'],[519,527,.75,.35,'n'],[527,533,.6,1,'n'],[533,541,.6,.25,'n'],[541,554,.25,.72,'n'],[554,566,.7,.25,'n'],[566,574,.25,.45,'n'],[574,579,1,1,'f'],[579,615,.88,.92,'L'],[615,630,1,.95,'L'],[630,673,.14,.17,'n'],[673,677,1,1,''],[677,690,.75,.2,'n'],[690,704,.2,.55,'n'],[704,710,.4,.9,'n'],[710,716,1,.95,'f'],[716,724,.6,1,'n'],[724,734,.7,.25,'n'],[734,745,.25,.5,'n'],[745,754,.25,.55,'n'],[754,768,.35,.45,'n'],[768,773,1,1,'f'],[773,808,.88,.92,'L'],[808,822,.95,.75,'L'],[822,832,.5,.08,''],[832,842,.04,.04,''],[842,846,1,.8,''],[846,870,.5,.3,'n']];
let seed=7;const rnd=()=>(seed=(seed*16807)%2147483647)/2147483647;
function level(t,i){
  if(t<0)return .14+rnd()*.1;
  const s=env.find(e=>t>=e[0]&&t<e[1]);if(!s)return .15;
  const v=s[2]+(s[3]-s[2])*(t-s[0])/(s[1]-s[0]);
  if(s[4]=='L')return i%4<2?v*(.82+rnd()*.18):v*(.42+rnd()*.25);
  if(s[4]=='n')return v*(.82+rnd()*.24);
  return v;
}
function wave(t,cy){
  let up='',dn='',i=0;const A=13.200;
  for(let x=0;x<=Math.min(t.end-1,930);x+=.9,i++){const a=Math.min(1,level(x-t.start,i))*A,b=Math.min(A,a*(.9+rnd()*.15));
    up+=`${x?'L':'M'}${x.toFixed(1)} ${(cy-a).toFixed(1)}`;dn=`L${x.toFixed(1)} ${(cy+b).toFixed(1)}`+dn;}
  return up+dn+'Z';
}
const line=(f,a,b)=>{let d='';for(let i=0;X0+i*BAR/10<929;i++)if(f(i)){d+=`M${(X0+i*BAR/10).toFixed(1)} ${a}V${b}`}return d};
const gMin=line(i=>i%5,0,57),gMid=line(i=>i%10==5,0,57),gMaj=line(i=>i%10==0,0,57);
const grad=(id,s)=>`<linearGradient id="${id}" gradientUnits="userSpaceOnUse" x1="0" y1="1" x2="0" y2="56">${s.map(([o,c])=>`<stop offset="${o}" stop-color="${c}"/>`).join('')}</linearGradient>`;
document.querySelector('defs').insertAdjacentHTML('beforeend',grad('gb',[[0,'#7ccdf1'],[.5,'#59b1dd'],[1,'#479fd0']])+grad('go',[[0,'#e3a680'],[.5,'#cb8354'],[1,'#bf6f3c']])+grad('gd',[[0,'#5a5e60'],[.28,'#45494b'],[.35,'#3a3e40'],[.7,'#1b1e20'],[1,'#0c1216']]));
$('lanes').innerHTML=tracks.map(t=>{
  const vb=t.cut=='top'?'0 39 930 18':t.cut=='bot'?'0 0 930 6':'0 0 930 56';
  const [bg,w1,s1,w2,s2]=t.sel?['url(#gd)','#70c2ea','#70c2ea','#50a8d6','#50a8d6']:t.o?['url(#go)','#966b4d','#453830','#78421f','#260f04']:['url(#gb)','#4e7d90','#2b3a44','#2a586d','#081f2a'];
  return `<div class="lane ${t.cut?'cut-'+t.cut:''}"><svg viewBox="${vb}" preserveAspectRatio="none"><path d="${gMin}" stroke="#45494d"/><path d="${gMid}" stroke="#666a6e"/><path d="${gMaj}" stroke="#94979a"/>
<rect x="0" y="1" width="${t.end}" height="54.500" fill="${bg}"/><svg x="0" y="1" width="${t.end}" height="54.500" viewBox="0 1 ${t.end} 54.500"><path d="${gMin+gMid+gMaj}" stroke="${t.sel?'#7fb0b8':t.o?'#6b2e08':'#0b4468'}" opacity=".18"/></svg>
<path d="${wave(t,15)}" fill="${w1}" stroke="${s1}" stroke-width=".7"/><path d="${wave(t,41.800)}" fill="${w2}" stroke="${s2}" stroke-width=".7"/>${t.sel?`<path d="M0 1.500h930M0 55h930" stroke="#5fb4dc" opacity=".7"/>`:''}</svg></div>`}).join('');

/* controller deck: [label, colour, extra classes, text colour] */
const G='#b9babb',D='#808284',R='#e23c36',GR='#46a02f',B='#3f87f0',O='#e9762e',Y='#e3d04a';
const arrow=d=>`<svg width="12" height="12"><path d="${d}" fill="none" stroke="currentColor" stroke-width="1.200"/></svg>`;
const aL=arrow('M11 6H1M5 2 1 6l4 4'),aR=arrow('M1 6h10M7 2l4 4-4 4'),aU=arrow('M6 11V1M2 5l4-4 4 4'),aD=arrow('M6 1v10M2 7l4 4 4-4');
const key=(l,c='',k='',tc='')=>`<button class="btn ${k}" ${/[a-z0-9]/i.test(l.replace(/<[^>]*>/g,''))?'':'aria-label="key"'} style="background:${c||'#2b323a'}${tc?';color:'+tc:''}"><span>${l}</span></button>`;
const box=(cols,keys)=>`<div class="boxk" style="grid-template-columns:${cols}">${keys.map(k=>key(...k)).join('')}</div>`;
const grp=(w,html,gap)=>`<div class="grp" style="flex:${w} 1 0;margin-right:${gap}px">${html}</div>`;
const cross='<svg width="12" height="12"><path d="m1 1 10 10M11 1 1 11" stroke="#b02a22" stroke-width="1.300"/></svg>';
$('deck').innerHTML=
grp(254,box('30fr 50fr 50fr 50fr 50fr',[[arrow('m1 8 5-5 5 5'),'#1c1d1e','','#888'],['EXPRESSION<br>MAP WIN',O],['Save Project','#ffff4a'],['Folder 1','#3579ee','fold'],['Recall<br>config 1','#ee8380'],
 ['PNL L1','#1c1d1e','cnr','#e6dc4a'],['MIDI REMOTE<br>CTRL WIN','#86207c'],['Add Track<br>[Audio]',G],['Folder 2','#5ac13a','fold'],['Recall<br>config 2','#ee8380'],
 [arrow('m1 4 5 5 5-5'),'#1c1d1e','','#e6dc4a'],[''],['Add Track<br>[MIDI]',G],['Folder 3','#ea55a4','fold'],['Recall<br>config 3','#ee8380']]),3)+
grp(145,box('repeat(4,1fr)',[['DEL',G],['SHIFT',G],['CTRL',G],['ALT',G],[''],[aL,G],[aU,G],[aR,G],['<svg width="22" height="7" class="mx-auto"><path d="M22 3.500H1M4 1 1 3.500 4 6" fill="none" stroke="#222"/></svg>BKSP',G],['<svg width="16" height="8" class="mx-auto"><path d="M1 2v4h14V2" fill="none" stroke="#222" stroke-width="2"/></svg>',G],[aD,G],['ENTER',G]]),2)+
grp(108,box('repeat(3,1fr)',[['TOOLS',O,'cnr'],['NUDGE',B,'cnr'],['SNAP',GR,'cnr']])+box('repeat(3,1fr)',[['Q<br>PANEL',GR],['Q',GR],['Q<br>RESET',GR]])+
 box('repeat(3,1fr)',[['<svg width="10" height="9" class="mx-auto"><path d="M1 0h6v6H1zM3 3h6v5H3z" fill="#fff" stroke="#bbb" stroke-width=".5"/></svg>COPY',Y],['<svg width="10" height="9" class="mx-auto"><path d="M4 9 6 0M1 7l3-2 5-1" fill="none" stroke="#222" stroke-width="1.500"/></svg>CUT',Y],['<svg width="10" height="9" class="mx-auto"><path d="M1 0h6v8H1z" fill="#222"/><path d="M4 2h5v6H4z" fill="#fff"/></svg>PASTE',Y]]),2)+
grp(34,box('1fr',[['FLOAT<br>NAVPAD','#909294','','#dcdddd']])+box('1fr',[['<svg width="12" height="9" class="mx-auto"><path d="M0 4 5 0v2.500q6 0 6 6Q9 5.500 5 5.500V8z"/></svg>UNDO',Y],['<svg width="12" height="9" class="mx-auto"><path d="M12 4 7 0v2.500q-6 0-6 6 2-3 6-3V8z"/></svg>REDO',Y]]),2)+
grp(293,box('repeat(8,1fr)',[['ADMIN<svg width="8" height="9" class="mx-auto"><path d="M1 4h6v4H1z"/><path d="M2.500 4V1h3v3" fill="none" stroke="#111"/></svg>',B,'cnr'],['WS',O,'cnr'],[''],[''],['DFADER<br>MODE','#efa9ac'],['OP / CL<br>FOLDER',R],['KB STD',B,'cnr'],['RESYNC',R]])+
 box('repeat(8,1fr)',[['MKRS',D],['AUTOM',R],['C.R.',O],['PANNER','#b0ffa5'],['DFADER<br>STGS',G],['MATRIX<br>WIN',B],['VIRT<br>KB',G],['FLOAT<br>MIX 1',GR]])+
 box('repeat(8,1fr)',[[ic('prev',9),G],[ic('next',9),G],['<svg width="14" height="8"><path d="M7 0v8L1 4zM13 0v8L7 4z"/></svg>',G],['<svg width="14" height="8"><path d="M1 0v8l6-4zM7 0v8l6-4z"/></svg>',G],[ic('loop',14,11),'#8480f5','','#fff'],[ic('stop',11),'#8c8e90','','#ddd'],[ic('play',9),G],[ic('rec',11),G]]),17)+
`<div class="d-flex flex-column align-items-center justify-content-between sidekeys" style="flex:42 1 0">${cross}<svg width="12" height="2"><path d="M0 1h12" stroke="#aaa"/></svg><div class="perf"></div></div>`+
grp(145,box('repeat(4,1fr)',[['FIT<br>PROJ',D],['<span class="d-grid zgrid"><span></span><span>V-</span><span></span><span>H-</span><b>ZOOM ALL<br>TRACKS</b><span>H+</span><span></span><span>V+</span><span></span></span>','#747678','rnd zoomall'],['V -',D],['FIT<br>HORIZ',D],['V +',D],['FIT<br>VERT',D],['H -',D],['H +',D],['MODE',D]]),3)+
grp(182,box('repeat(5,1fr)',[['WHEEL:<br>POS','#d0d1d2','rnd'],['WHEEL:<br>JOG','#d0d1d2','rnd'],['WHEEL:<br>SHUTT','#d0d1d2','rnd'],['TRACK<br>SEL','#b5ad30','rnd'],['<svg width="15" height="8"><path d="M4 1 1 4l3 3M11 1l3 3-3 3M2 4h3M6 4h3M10 4h3" fill="none" stroke="#111"/></svg>','#356dc6','rnd'],
 ['GAIN','#b9322e','rnd'],['SLIP','#37801f','rnd'],['SNAP','#356dc6','rnd'],['<svg width="15" height="15"><path d="M4 5 1 7.500 4 10M11 5l3 2.500-3 2.500M5 4l2.500-3L10 4M5 11l2.500 3 2.500-3M2 7.500h11M7.500 2v11" fill="none" stroke="#111" stroke-dasharray="2 1"/></svg>','#356dc6','rnd'],['<svg width="8" height="15"><path d="M1 4l3-3 3 3M1 11l3 3 3-3M4 2v3M4 6v3M4 10v3" fill="none" stroke="#111"/></svg>','#356dc6','rnd'],
 ['FADE<br>IN','#45a3a1','rnd'],['FADE<br>OUT','#45a3a1','rnd'],['TRIM<br>START','#c05e22','rnd'],['TRIM<br>END','#c05e22','rnd'],['OCTAVE<br>+ / -','#356dc6','rnd']]),2)+
grp(35,box('1fr',[['SCROLL',D]])+box('1fr',[['SCRUB',D],['RANGE<br>SEL',D]]),2)+
`<div class="grp" style="flex:35 1 0"><div class="d-flex justify-content-center align-items-center tall">${cross}</div><div class="d-flex justify-content-center align-items-center tall"><div class="perf"></div></div>${box('1fr',[['SET<br>SENSE','#f4a4a9']])}</div>`;
</script>
</body>
</html>
